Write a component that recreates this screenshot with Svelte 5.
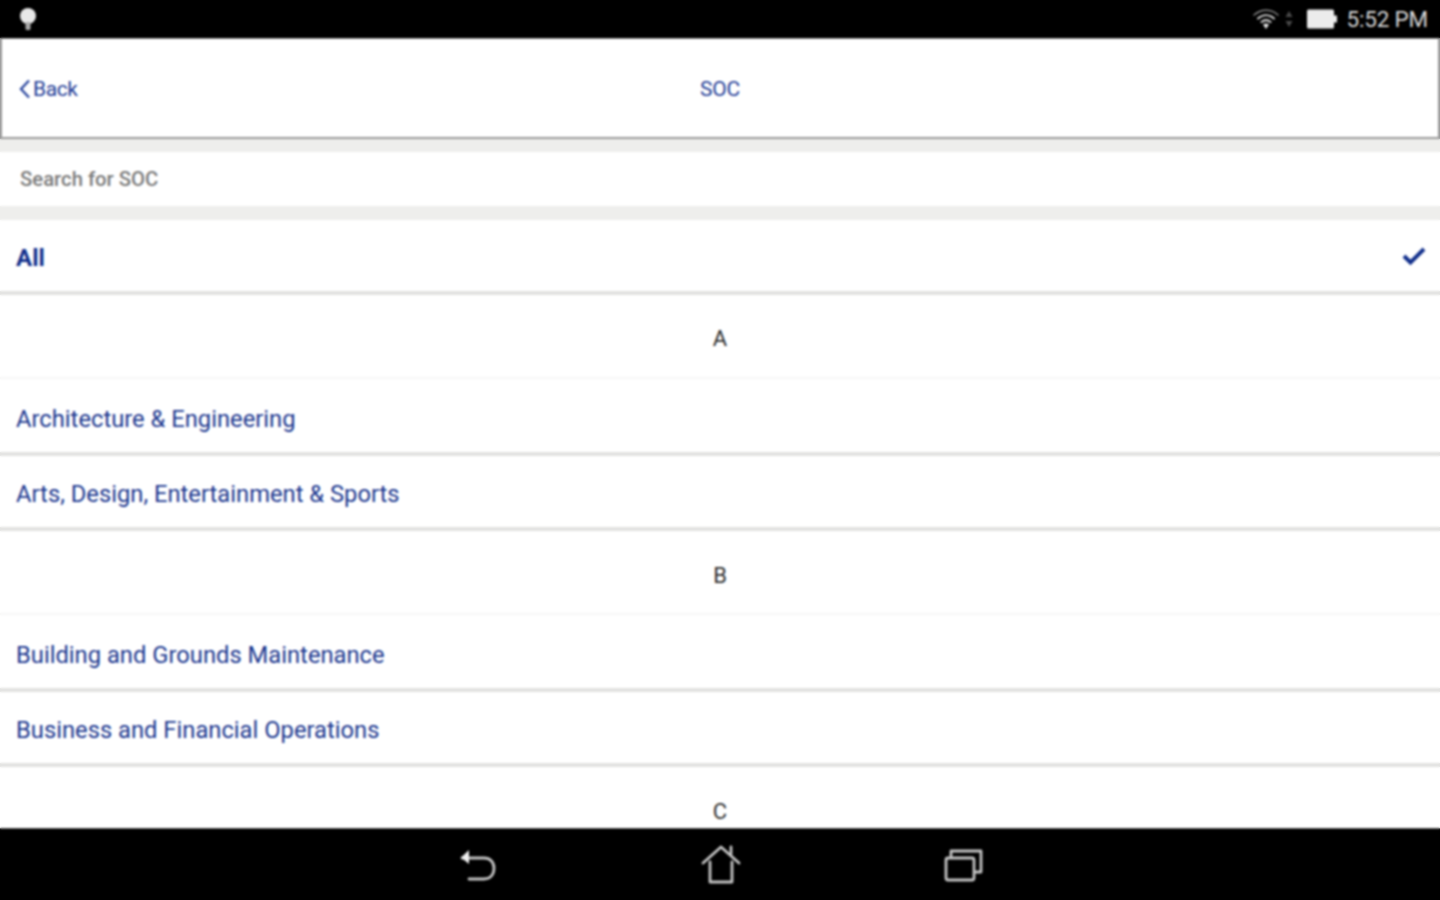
<script>
	const sections = [
		{ letter: 'A', items: ['Architecture & Engineering', 'Arts, Design, Entertainment & Sports'] },
		{ letter: 'B', items: ['Building and Grounds Maintenance', 'Business and Financial Operations'] },
		{ letter: 'C', items: [] }
	];
</script>

<div class="screen">
	<header class="status-bar">
		<svg class="notif" width="20" height="26" viewBox="0 0 20 26">
			<circle cx="10" cy="10" r="8" fill="#e8e8e8" />
			<rect x="7.500" y="16" width="5" height="8" rx="1.500" fill="#aaa" />
		</svg>
		<div class="status-right">
			<svg width="28" height="24" viewBox="0 0 28 24" fill="none" stroke="#cfcfcf" stroke-linecap="round">
				<path d="M2 8 C9 1.500 19 1.500 26 8" stroke-width="1.500" stroke="#888" />
				<path d="M6 11.500 C11 7 17 7 22 11.500" stroke-width="2" />
				<path d="M9.500 15 C12.500 12.500 15.500 12.500 18.500 15" stroke-width="2" />
				<path d="M14 22 L11 17.500 C13 16 15 16 17 17.500 Z" fill="#e8e8e8" stroke="none" />
			</svg>
			<svg class="arrows" width="8" height="20" viewBox="0 0 8 20" fill="#4a4a4a">
				<path d="M4 2 L7.500 8 H0.500 Z" />
				<path d="M4 18 L7.500 12 H0.500 Z" />
			</svg>
			<svg class="battery" width="32" height="22" viewBox="0 0 32 22" fill="#ececec">
				<rect x="1" y="1.500" width="27" height="19" rx="1.500" />
				<rect x="28" y="7.500" width="3" height="7" />
			</svg>
			<span class="clock">5:52 PM</span>
		</div>
	</header>

	<nav class="nav-bar">
		<div class="back">
			<svg width="13" height="20" viewBox="0 0 13 20" fill="none" stroke="#2f4aa0" stroke-width="2.400">
				<path d="M11 1.500 L3 10 L11 18.500" />
			</svg>
			<span>Back</span>
		</div>
		<div class="nav-title">SOC</div>
	</nav>

	<div class="search-wrap">
		<div class="search">Search for SOC</div>
	</div>

	<main class="list">
		<div class="row row-all">
			<span>All</span>
			<svg class="check" width="24" height="20" viewBox="0 0 24 20" fill="none" stroke="#12308c" stroke-width="4">
				<path d="M2 10 L8.500 16.500 L22 3" />
			</svg>
		</div>
		{#each sections as section}
			<div class="section-head"><span>{section.letter}</span></div>
			{#each section.items as item}
				<div class="row">{item}</div>
			{/each}
		{/each}
	</main>

	<footer class="nav-keys">
		<svg class="key-back" width="40" height="36" viewBox="0 0 40 36" fill="none" stroke="#c4c4c4" stroke-width="2.800" stroke-linecap="round">
			<path d="M4 11 H26 C32 11 36 15 36 21 C36 28 32 32 26 32 H11" />
			<path d="M11 3 L3 10.500 L11 17 Z" fill="#f0f0f0" stroke="none" />
		</svg>
		<svg width="40" height="40" viewBox="0 0 40 40" fill="none" stroke="#c4c4c4" stroke-width="2.800" stroke-linecap="round" stroke-linejoin="round">
			<path d="M2 18 L20 2 L38 18" />
			<path d="M30 9 V2" />
			<path d="M9 17 V37 H31 V17" />
		</svg>
		<svg class="key-recent" width="40" height="36" viewBox="0 0 40 36" fill="none" stroke="#c4c4c4" stroke-width="2.800" stroke-linejoin="round">
			<rect x="2" y="11" width="28" height="22" rx="2" />
			<path d="M7 11 V4 H37 V25 H30" />
		</svg>
	</footer>
</div>

<style>
	:global(body) {
		margin: 0;
		background: #fff;
	}

	.screen {
		position: relative;
		width: 1440px;
		height: 900px;
		display: flex;
		flex-direction: column;
		overflow: hidden;
		font-family: Roboto, "Liberation Sans", sans-serif;
	}

	/* the reference is an upscaled capture, so soften everything under this layer */
	.screen::after {
		content: '';
		position: absolute;
		inset: 0;
		pointer-events: none;
		backdrop-filter: blur(0.8px);
	}

	.status-bar {
		height: 38px;
		flex: none;
		background: #000;
		display: flex;
		align-items: center;
		justify-content: space-between;
		padding: 0 12px 0 18px;
	}

	.status-right {
		display: flex;
		align-items: center;
		color: #d8d8d8;
	}

	.arrows {
		margin: 0 13px 0 5px;
	}

	.clock {
		font-size: 22.500px;
		margin-left: 9px;
		letter-spacing: -0.2px;
	}

	.nav-bar {
		height: 101px;
		flex: none;
		box-sizing: border-box;
		border: 2px solid #999;
		border-top: 1px solid #999;
		background: #fff;
		display: grid;
		grid-template-columns: 1fr auto 1fr;
		align-items: center;
		padding: 2px 16px 0;
		color: #1f3c96;
		font-size: 21px;
	}

	.back {
		display: flex;
		align-items: center;
		gap: 2px;
		letter-spacing: -0.4px;
	}

	.nav-title {
		letter-spacing: -0.2px;
	}

	.search-wrap {
		flex: none;
		background: #eeeeec;
		padding: 13px 0 14px;
	}

	.search {
		height: 54px;
		background: #fff;
		display: flex;
		align-items: center;
		padding-left: 20px;
		font-size: 20.300px;
		font-weight: 500;
		color: #7a7a7a;
	}

	.list {
		flex: 1;
		min-height: 0;
		overflow: hidden;
		background: #fff;
	}

	.row {
		box-sizing: border-box;
		height: 75px;
		border-bottom: 4px solid #e2e2e0;
		display: flex;
		align-items: center;
		justify-content: space-between;
		padding: 4px 14px 0 16px;
		font-size: 23.750px;
		color: #1c388f;
	}

	.section-head + .row {
		height: 77px;
		padding-top: 6px;
	}

	.row-all {
		height: 75px;
		font-size: 24px;
		font-weight: 700;
		color: #12308c;
		padding-top: 4px;
	}

	.check {
		margin-top: -3px;
	}

	.section-head {
		box-sizing: border-box;
		height: 84px;
		border-bottom: 2px solid #f7f7f6;
		display: flex;
		justify-content: center;
		padding-top: 32px;
		font-size: 22px;
		color: #2e2e2e;
	}

	.row-all + .section-head {
		padding-top: 31px;
	}

	.nav-keys {
		height: 72px;
		flex: none;
		background: #000;
		border-top: 1px solid #555;
		box-sizing: border-box;
		display: flex;
		justify-content: center;
		align-items: center;
		gap: 202px;
		padding-left: 1px;
	}

	.key-back {
		margin-right: 1px;
	}

	.key-recent {
		margin-left: 1px;
	}
</style>
